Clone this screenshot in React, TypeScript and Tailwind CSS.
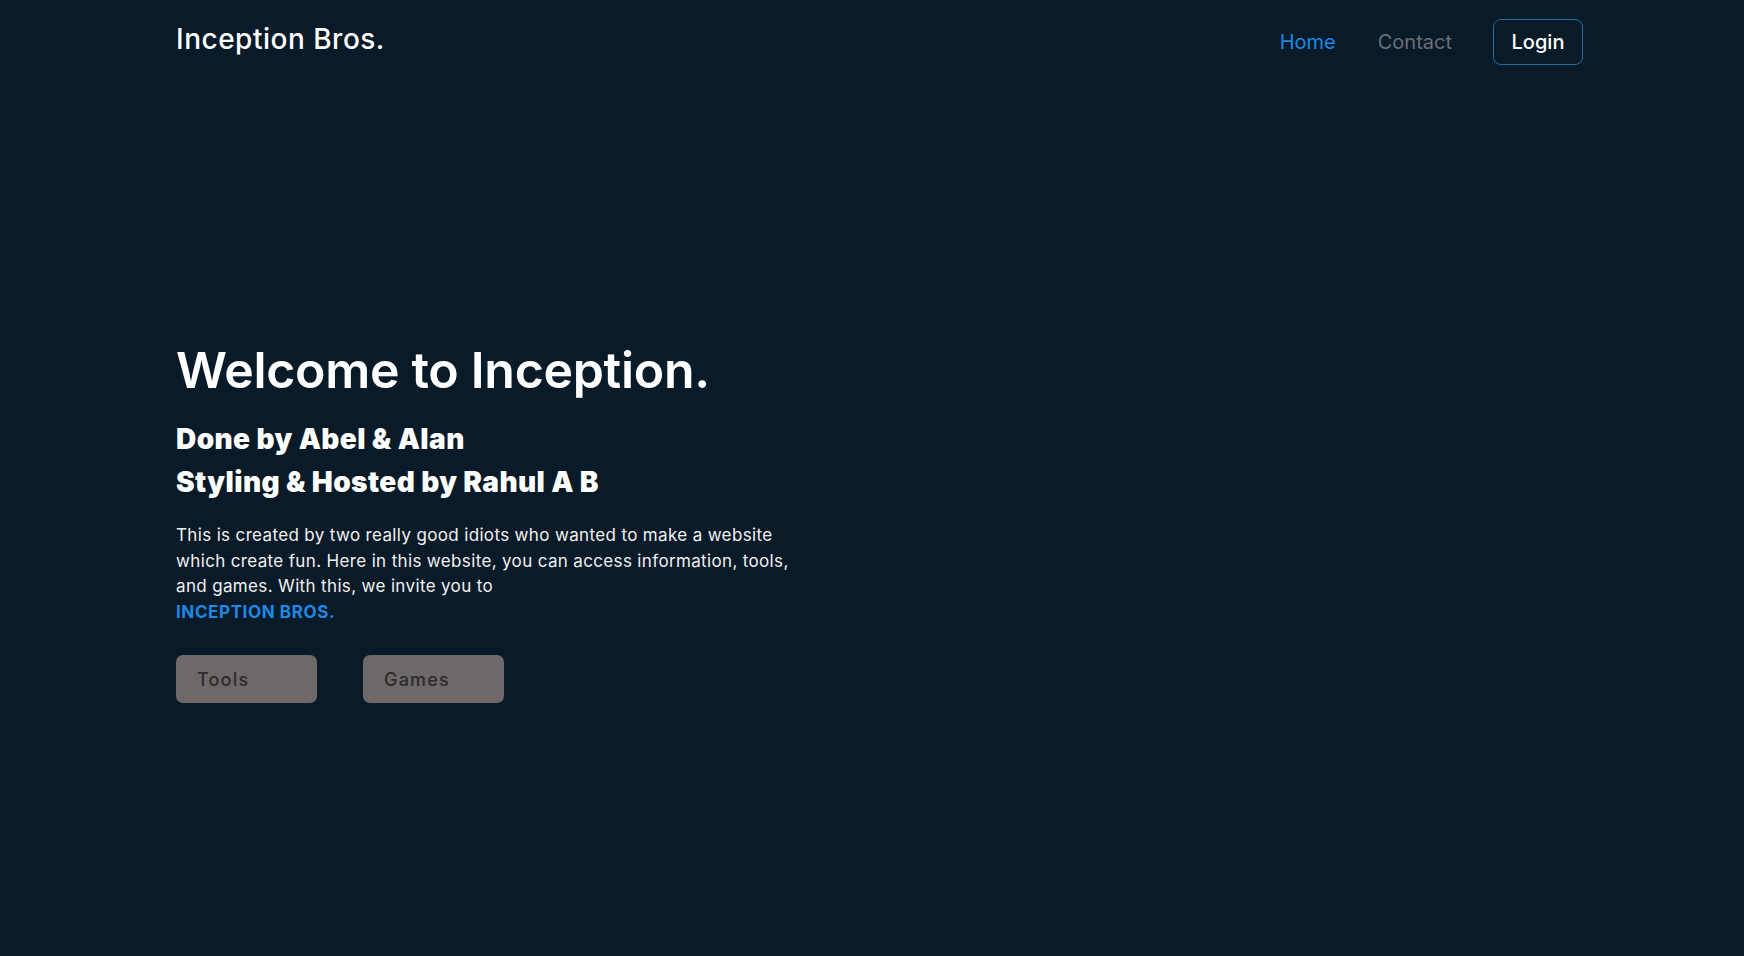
export default function App() {
  return (
    <div
      className="min-h-screen w-full bg-[#091a28] text-white"
      style={{ fontFamily: 'Inter, "Open Sans", sans-serif' }}
    >
      <header className="flex items-center justify-between pl-[176px] pr-[161px] pt-[19px]">
        <a href="#" className="-mt-[6px] text-[28px] font-medium leading-none tracking-[0.5px]">
          Inception Bros.
        </a>
        <nav className="flex items-center">
          <a href="#" className="text-[20px] text-[#1e88e5]">Home</a>
          <a href="#" className="ml-[42px] text-[20px] text-[#6b6f75]">Contact</a>
          <button className="ml-[41px] h-[46px] w-[90px] rounded-[8px] border border-[#1c6ca6] text-[20px] font-medium text-white">
            Login
          </button>
        </nav>
      </header>

      <main className="pl-[176px] pt-[275px]">
        <h1 className="text-[50px] font-semibold leading-[60px] tracking-[-0.3px]">Welcome to Inception.</h1>
        <h2 className="mt-[18px] text-[28px] font-black leading-[43px] tracking-[0.4px]">
          Done by Abel &amp; Alan
          <br />
          Styling &amp; Hosted by Rahul A B
        </h2>
        <p className="mt-[19px] w-[640px] text-[17px] leading-[25.5px] tracking-[0.35px] text-[#f1f1f1]">
          This is created by two really good idiots who wanted to make a website
          <br />
          which create fun. Here in this website, you can access information, tools,
          <br />
          and games. With this, we invite you to
          <br />
          <span className="font-bold tracking-[0.6px] text-[#1e88e5]">INCEPTION BROS.</span>
        </p>
        <div className="mt-[30px] flex gap-[46px]">
          <button className="h-[48px] w-[141px] rounded-[7px] bg-[#6e6869] pl-[21px] text-left text-[18px] font-medium tracking-[1.2px] text-[#2a2a2a]">
            Tools
          </button>
          <button className="h-[48px] w-[141px] rounded-[7px] bg-[#6e6869] pl-[21px] text-left text-[18px] font-medium tracking-[1.2px] text-[#2a2a2a]">
            Games
          </button>
        </div>
      </main>
    </div>
  );
}
